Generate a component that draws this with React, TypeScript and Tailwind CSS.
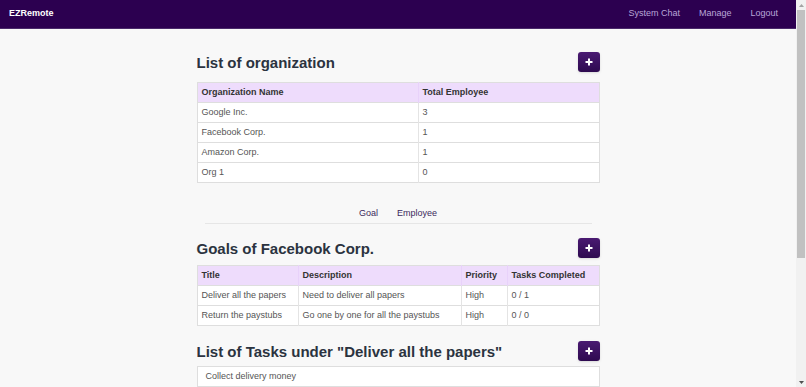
import React from 'react';

const orgs = [
  { name: 'Google Inc.', total: 3 },
  { name: 'Facebook Corp.', total: 1 },
  { name: 'Amazon Corp.', total: 1 },
  { name: 'Org 1', total: 0 },
];

const goals = [
  { title: 'Deliver all the papers', desc: 'Need to deliver all papers', priority: 'High', done: '0 / 1' },
  { title: 'Return the paystubs', desc: 'Go one by one for all the paystubs', priority: 'High', done: '0 / 0' },
];

function AddButton() {
  return (
    <button className="w-[22px] h-[20px] rounded-[3px] bg-gradient-to-b from-[#4a1a72] to-[#2e0a50] flex items-center justify-center shadow-sm">
      <svg width="10" height="10" viewBox="0 0 10 10">
        <path d="M5 1.5v7M1.5 5h7" stroke="#fff" strokeWidth="2" strokeLinecap="butt" />
      </svg>
    </button>
  );
}

function SectionHeader({ title }: { title: string }) {
  return (
    <div className="flex items-center justify-between h-[20px]">
      <h3 className="text-[15px] font-bold text-[#2b3340] leading-none">{title}</h3>
      <AddButton />
    </div>
  );
}

export default function App() {
  return (
    <div className="flex h-[387px] overflow-hidden bg-[#f8f8f8] font-['Liberation_Sans',Arial,sans-serif]">
      <div className="w-[796px] flex flex-col">
        {/* Navbar */}
        <nav className="h-[29px] shrink-0 bg-[#2c0050] flex items-center justify-between pl-[9px] pr-[18px] border-b border-[#4a2a6a]">
          <span className="text-white font-bold text-[9px]">EZRemote</span>
          <div className="flex items-center gap-[19px] text-[9px] text-[#b9a6d8]">
            <span>System Chat</span>
            <span>Manage</span>
            <span>Logout</span>
          </div>
        </nav>

        <div className="w-[403px] mx-auto pt-[23px]">
          <SectionHeader title="List of organization" />

          <table className="w-full mt-[10px] border-collapse text-[9px] border border-[#dedede]">
            <thead>
              <tr className="bg-[#eedcfc] h-[20px] text-left text-[#333]">
                <th className="font-bold px-[4px] w-[221px] border-r border-[#e8d2fa]">Organization Name</th>
                <th className="font-bold px-[4px]">Total Employee</th>
              </tr>
            </thead>
            <tbody>
              {orgs.map((o) => (
                <tr key={o.name} className="bg-white h-[20px] text-[#555] border-t border-[#dedede]">
                  <td className="px-[4px] border-r border-[#e4e4e4]">{o.name}</td>
                  <td className="px-[4px]">{o.total}</td>
                </tr>
              ))}
            </tbody>
          </table>

          {/* Tabs */}
          <div className="mt-[26px] mx-[8px] border-b border-[#e6e6e6] h-[15px] flex justify-center gap-[19px] text-[9px] text-[#3b2a5c] leading-none">
            <span>Goal</span>
            <span>Employee</span>
          </div>

          <div className="mt-[14px]">
            <SectionHeader title="Goals of Facebook Corp." />
          </div>

          <table className="w-full mt-[7px] border-collapse text-[9px] border border-[#dedede]">
            <thead>
              <tr className="bg-[#eedcfc] h-[20px] text-left text-[#333]">
                <th className="font-bold px-[4px] w-[101px] border-r border-[#e8d2fa]">Title</th>
                <th className="font-bold px-[4px] w-[163px] border-r border-[#e8d2fa]">Description</th>
                <th className="font-bold px-[4px] w-[46px] border-r border-[#e8d2fa]">Priority</th>
                <th className="font-bold px-[4px]">Tasks Completed</th>
              </tr>
            </thead>
            <tbody>
              {goals.map((g) => (
                <tr key={g.title} className="bg-white h-[20px] text-[#555] border-t border-[#dedede]">
                  <td className="px-[4px] border-r border-[#e4e4e4]">{g.title}</td>
                  <td className="px-[4px] border-r border-[#e4e4e4]">{g.desc}</td>
                  <td className="px-[4px] border-r border-[#e4e4e4]">{g.priority}</td>
                  <td className="px-[4px]">{g.done}</td>
                </tr>
              ))}
            </tbody>
          </table>

          <div className="mt-[15px]">
            <SectionHeader title={'List of Tasks under "Deliver all the papers"'} />
          </div>

          <div className="mt-[5px] bg-white border border-[#dedede] h-[21px] flex items-center px-[8px] text-[9px] text-[#555]">
            Collect delivery money
          </div>
        </div>
      </div>

      {/* Scrollbar */}
      <div className="w-[10px] bg-[#f1f1f1] flex flex-col items-center">
        <div className="h-[10px] flex items-center justify-center">
          <svg width="5" height="3" viewBox="0 0 5 3"><path d="M0 3L2.5 0L5 3Z" fill="#a3a3a3" /></svg>
        </div>
        <div className="w-[8px] h-[248px] bg-[#c1c1c1]" />
        <div className="flex-1" />
        <div className="h-[10px] flex items-center justify-center">
          <svg width="5" height="3" viewBox="0 0 5 3"><path d="M0 0L2.5 3L5 0Z" fill="#505050" /></svg>
        </div>
      </div>
    </div>
  );
}
